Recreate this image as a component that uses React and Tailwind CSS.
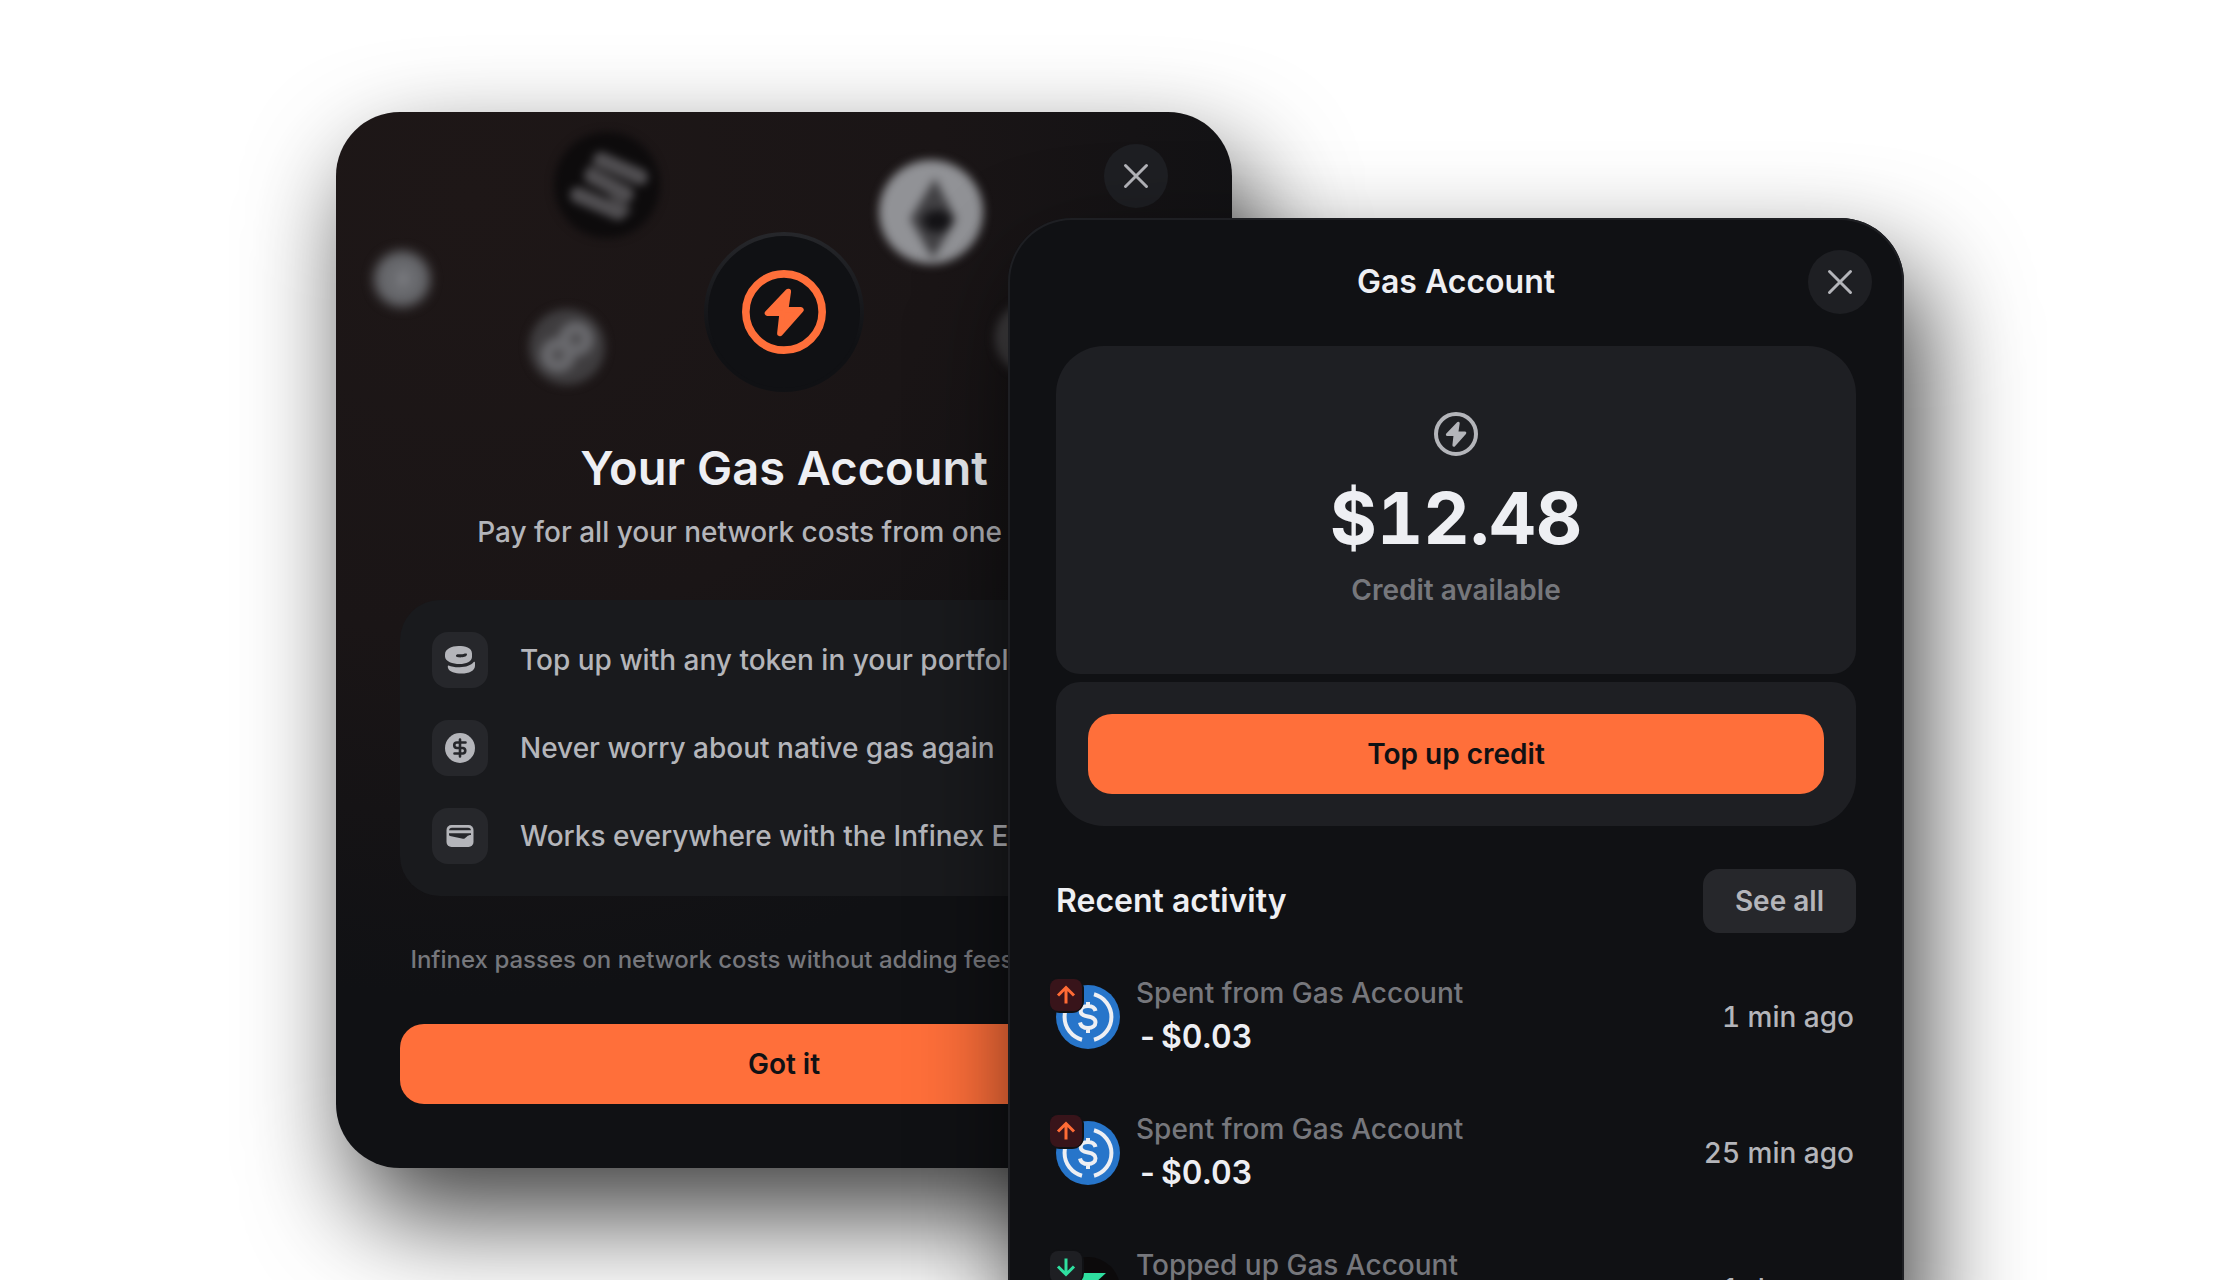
import { useId } from "react";

function BoltIcon({ className }) {
  return (
    <svg viewBox="0 0 44 44" className={className} fill="none" aria-hidden="true">
      <circle cx="22" cy="22" r="20" stroke="currentColor" strokeWidth="4" />
      <path
        d="M24.200 11.300 13.400 22.600h7.700l-1.200 10.600L30.800 20.900h-8Z"
        fill="currentColor"
        stroke="currentColor"
        strokeWidth="3"
        strokeLinejoin="round"
      />
    </svg>
  );
}

function CloseButton() {
  return (
    <button
      type="button"
      aria-label="Close"
      className="flex size-16 shrink-0 items-center justify-center rounded-full bg-[#1e1f23] text-[#b4b5ba]"
    >
      <svg viewBox="0 0 24 24" className="size-6 overflow-visible" fill="none" aria-hidden="true">
        <path d="M1.500 1.500 22.500 22.500M22.500 1.500 1.500 22.500" stroke="currentColor" strokeWidth="3" strokeLinecap="round" />
      </svg>
    </button>
  );
}

function CoinsIcon() {
  return (
    <svg viewBox="0 0 32 32" className="size-8" aria-hidden="true">
      <path
        fill="#b4b5ba"
        fillRule="evenodd"
        d="M14.500 2C21 2 28 3.500 28 9.500v3.500c0 4.500-6 7-12.500 7S1 17.500 1 12.500V10.500C1 5 7.500 2 14.500 2Zm-.3 8.300c-2.700 0-3.200 2.700 0 3 3 .3 8.300 0 8.800-2.800.2-1.300-1.500-1-3.500-.6-1.500.3-3.700.4-5.300.4Z"
      />
      <path
        fill="#b4b5ba"
        d="M4.500 21.500c3 1.200 6.500 1.900 11.200 1.800 6.500 0 11.300-1.900 14-5.200.7-.5 1.300-.2 1.300.6v3c0 5-6 7.800-13.500 7.800-6.500 0-12-1.500-13.300-5-.6-1.500-.6-3.300.3-3Z"
      />
    </svg>
  );
}

function DollarIcon() {
  return (
    <svg viewBox="0 0 32 32" className="size-8" fill="none" aria-hidden="true">
      <circle cx="16" cy="16" r="15" fill="#b4b5ba" />
      <path
        d="M21.500 10.500h-8.500a2.700 2.700 0 0 0 0 5.500h6a2.800 2.800 0 0 1 0 5.500h-8.500M16 7.500v17"
        stroke="#26272b"
        strokeWidth="2.600"
        strokeLinecap="round"
        strokeLinejoin="round"
      />
    </svg>
  );
}

function WalletIcon() {
  return (
    <svg viewBox="0 0 32 32" className="size-8" aria-hidden="true">
      <rect x="2.500" y="5" width="27" height="22" rx="5" fill="#b4b5ba" />
      <path d="M5 11c0-2 1.200-3.200 3-3.200h16c1.800 0 3 1.200 3 3Z" fill="#26272b" />
      <path d="M5 10.300h22v2.200H5Z" fill="#b4b5ba" />
      <path d="M5 13.300h22v1.700c-1.800 0-3 .5-4 1.500-1.300 1.300-2.700 2.600-4 2.300L6 16c-.7-.2-1-.6-1-1Z" fill="#26272b" />
    </svg>
  );
}

function UsdcIcon() {
  return (
    <svg viewBox="0 0 64 64" className="size-16" fill="none" aria-hidden="true">
      <circle cx="32" cy="32" r="32" fill="#2775ca" />
      <g stroke="#eeeff3" strokeWidth="4">
        <path d="M26 54.700a23.500 23.500 0 0 1 0-45.400" />
        <path d="M38 54.700a23.500 23.500 0 0 0 0-45.400" />
        <path d="M39.500 26c-.8-3.500-3.300-5-7.500-5-4.500 0-7.300 2-7.300 5.200 0 3.500 2.800 4.500 7.300 5.300s7.500 2 7.500 5.700c0 3.600-3 5.800-7.500 5.800-4.800 0-7.300-2-8-5.500M32 17v5M32 42.500V48" />
      </g>
    </svg>
  );
}

function GreenTokenIcon() {
  return (
    <svg viewBox="0 0 64 64" className="size-16" fill="none" aria-hidden="true">
      <circle cx="32" cy="32" r="32" fill="#0c0a0b" />
      <path d="M20 16h30L38 27H24Z" fill="#2fe0a0" />
      <path d="M14 37h26l10 11H24Z" fill="#2fe0a0" />
      <path d="M22 23h14l-8 8Z" fill="#3559c7" />
    </svg>
  );
}

function ArrowBadge({ down }) {
  const tone = down ? "bg-[#1e1f23] text-[#2fe0a0]" : "bg-[#38141a] text-[#ff6b35]";
  return (
    <span className="absolute -top-2 -left-2 flex size-9 items-center justify-center rounded-xl bg-[#101114]">
      <span className={`flex size-8 items-center justify-center rounded-lg ${tone}`}>
        <svg
          viewBox="0 0 20 20"
          className={down ? "size-5 rotate-180" : "size-5"}
          fill="none"
          stroke="currentColor"
          strokeWidth="3"
          aria-hidden="true"
        >
          <path d="M10 18.500V3M2 10.500 10 2.500l8 8" />
        </svg>
      </span>
    </span>
  );
}

function FloatingCoins() {
  const clip = useId();
  return (
    <svg viewBox="0 0 896 320" className="absolute inset-x-0 top-0 w-full" fill="none" aria-hidden="true">
      <defs>
        <clipPath id={clip}>
          <circle cx="595" cy="100" r="52" />
        </clipPath>
      </defs>
      <g className="blur-[4px]">
        <circle cx="271" cy="73" r="53" fill="#0d0b0c" />
        <path d="M254 50 248 66 290 88 296 100 286 106 Z" fill="#3a383a" />
        <g stroke="#504e51" strokeWidth="16" strokeLinecap="round">
          <path d="M265 48 304 65" />
          <path d="M256 64 290 82" />
          <path d="M242 83 282 100" />
        </g>
      </g>
      <g className="blur-[5px]">
        <circle cx="595" cy="100" r="52" fill="#919296" />
        <g clipPath={`url(#${clip})`}>
          <path d="M599 66 620 107 597 147 574 107Z" fill="#414043" />
          <ellipse cx="601" cy="109" rx="15" ry="11" fill="#141316" />
        </g>
      </g>
      <g className="blur-[6px]">
        <circle cx="66" cy="167" r="28" fill="#67686c" />
        <path d="m72 154-14 14h8l-4 12 14-15h-8Z" fill="#85868b" />
      </g>
      <g className="blur-[5px]">
        <circle cx="231" cy="235" r="38" fill="#3f3d3f" />
        <g stroke="#68686c" strokeWidth="13">
          <circle cx="240" cy="227" r="11" />
          <circle cx="222" cy="243" r="11" />
        </g>
      </g>
      <g className="blur-[5px]">
        <circle cx="696" cy="226" r="37" fill="#3f3d3f" />
      </g>
    </svg>
  );
}

const benefits = [
  { icon: CoinsIcon, text: "Top up with any token in your portfolio" },
  { icon: DollarIcon, text: "Never worry about native gas again" },
  { icon: WalletIcon, text: "Works everywhere with the Infinex Extension" },
];

const activity = [
  { id: 1, token: UsdcIcon, label: "Spent from Gas Account", sign: "-", amount: "$0.03", time: "1 min ago" },
  { id: 2, token: UsdcIcon, label: "Spent from Gas Account", sign: "-", amount: "$0.03", time: "25 min ago" },
  { id: 3, token: GreenTokenIcon, label: "Topped up Gas Account", sign: "+", amount: "$10.00", time: "1 day ago", down: true },
];

function IntroDialog() {
  return (
    <section className="relative col-start-1 row-start-1 mt-28 flex w-full max-w-[896px] flex-col self-start rounded-[64px] bg-[#101114] bg-[radial-gradient(ellipse_860px_800px_at_15%_8%,#1e1717_0%,#1a1516_55%,#101114_100%)] px-16 pt-8 pb-16 shadow-[18px_48px_104px_0_rgba(0,0,0,0.75)]">
      <FloatingCoins />
      <div className="relative flex justify-end">
        <CloseButton />
      </div>
      <div className="relative mt-6 flex size-40 items-center justify-center self-center rounded-full bg-linear-to-b from-[#26272b] to-[#101114] to-70% p-1">
        <div className="flex size-full items-center justify-center rounded-full bg-[#101114] text-[#ff6f3a]">
          <BoltIcon className="size-21" />
        </div>
      </div>
      <div className="relative mt-11 flex flex-col items-center gap-2">
        <h1 className="text-[47px]/16 font-semibold text-[#eeeff3]">Your Gas Account</h1>
        <p className="text-[28px]/12 font-medium whitespace-nowrap text-[#b4b5ba]">
          Pay for all your network costs from one place.
        </p>
      </div>
      <ul className="relative mt-11 flex flex-col gap-8 rounded-[40px] bg-[#191a1d] p-8">
        {benefits.map(({ icon: Icon, text }) => (
          <li key={text} className="flex items-center gap-8">
            <span className="flex size-14 shrink-0 items-center justify-center rounded-2xl bg-[#26272b]">
              <Icon />
            </span>
            <span className="text-[28px]/10 font-medium whitespace-nowrap text-[#b4b5ba]">{text}</span>
          </li>
        ))}
      </ul>
      <p className="relative mt-12 text-center text-2xl font-medium whitespace-nowrap text-[#76777c]">
        Infinex passes on network costs without adding fees or markups.
      </p>
      <button type="button" className="relative mt-12 h-20 rounded-3xl bg-[#ff6f3a] text-[28px] font-semibold text-[#101114]">
        Got it
      </button>
    </section>
  );
}

function ActivityRow({ token: Token, label, sign, amount, time, down }) {
  return (
    <li className="flex items-center gap-4">
      <span className="relative shrink-0">
        <Token />
        <ArrowBadge down={down} />
      </span>
      <div className="flex flex-1 flex-col">
        <span className="text-[28px]/10 font-medium text-[#76777c]">{label}</span>
        <span className="flex gap-1.5 pl-1 text-[32px]/12 font-semibold text-[#eeeff3]">
          <span>{sign}</span>
          <span className="tabular-nums">{amount}</span>
        </span>
      </div>
      <time className="pr-0.5 text-[28px]/10 font-medium text-[#b4b5ba] tabular-nums">{time}</time>
    </li>
  );
}

function AccountDialog() {
  return (
    <section className="relative col-start-1 row-start-1 mt-[218px] flex w-full max-w-[896px] flex-col justify-self-end rounded-t-[64px] bg-[#101114] shadow-[0_0_0_2px_#1e1f23_inset,18px_48px_104px_0_rgba(0,0,0,0.75)]">
      <header className="grid grid-cols-[64px_1fr_64px] items-center px-8 pt-8">
        <h2 className="col-start-2 text-center text-[32px]/10 font-semibold text-[#eeeff3]">Gas Account</h2>
        <CloseButton />
      </header>
      <div className="mt-8 flex flex-col gap-2 px-12">
        <div className="flex flex-col items-center rounded-t-[48px] rounded-b-3xl bg-[#1e1f23] py-16 text-[#b4b5ba]">
          <span className="flex size-12 items-center justify-center">
            <BoltIcon className="size-11" />
          </span>
          <p className="mt-5 text-7xl/20 font-bold text-[#eeeff3] tabular-nums">$12.48</p>
          <p className="mt-3 text-[28px]/10 font-semibold text-[#76777c]">Credit available</p>
        </div>
        <div className="flex rounded-t-3xl rounded-b-[48px] bg-[#1e1f23] p-8">
          <button type="button" className="h-20 flex-1 rounded-3xl bg-[#ff6f3a] text-[28px] font-semibold text-[#101114]">
            Top up credit
          </button>
        </div>
      </div>
      <div className="mt-[43px] flex items-center justify-between px-12">
        <h3 className="text-[32px]/10 font-semibold text-[#eeeff3]">Recent activity</h3>
        <button type="button" className="h-16 rounded-2xl bg-[#26272b] px-8 text-[28px] font-semibold text-[#b4b5ba]">
          See all
        </button>
      </div>
      <ul className="mt-10 flex flex-col gap-12 px-12">
        {activity.map((item) => (
          <ActivityRow key={item.id} {...item} />
        ))}
      </ul>
    </section>
  );
}

export default function App() {
  return (
    <main className="flex h-screen justify-center overflow-hidden bg-white font-[Inter,sans-serif]">
      <div className="grid w-full max-w-[1568px] grid-cols-1">
        <IntroDialog />
        <AccountDialog />
      </div>
    </main>
  );
}
